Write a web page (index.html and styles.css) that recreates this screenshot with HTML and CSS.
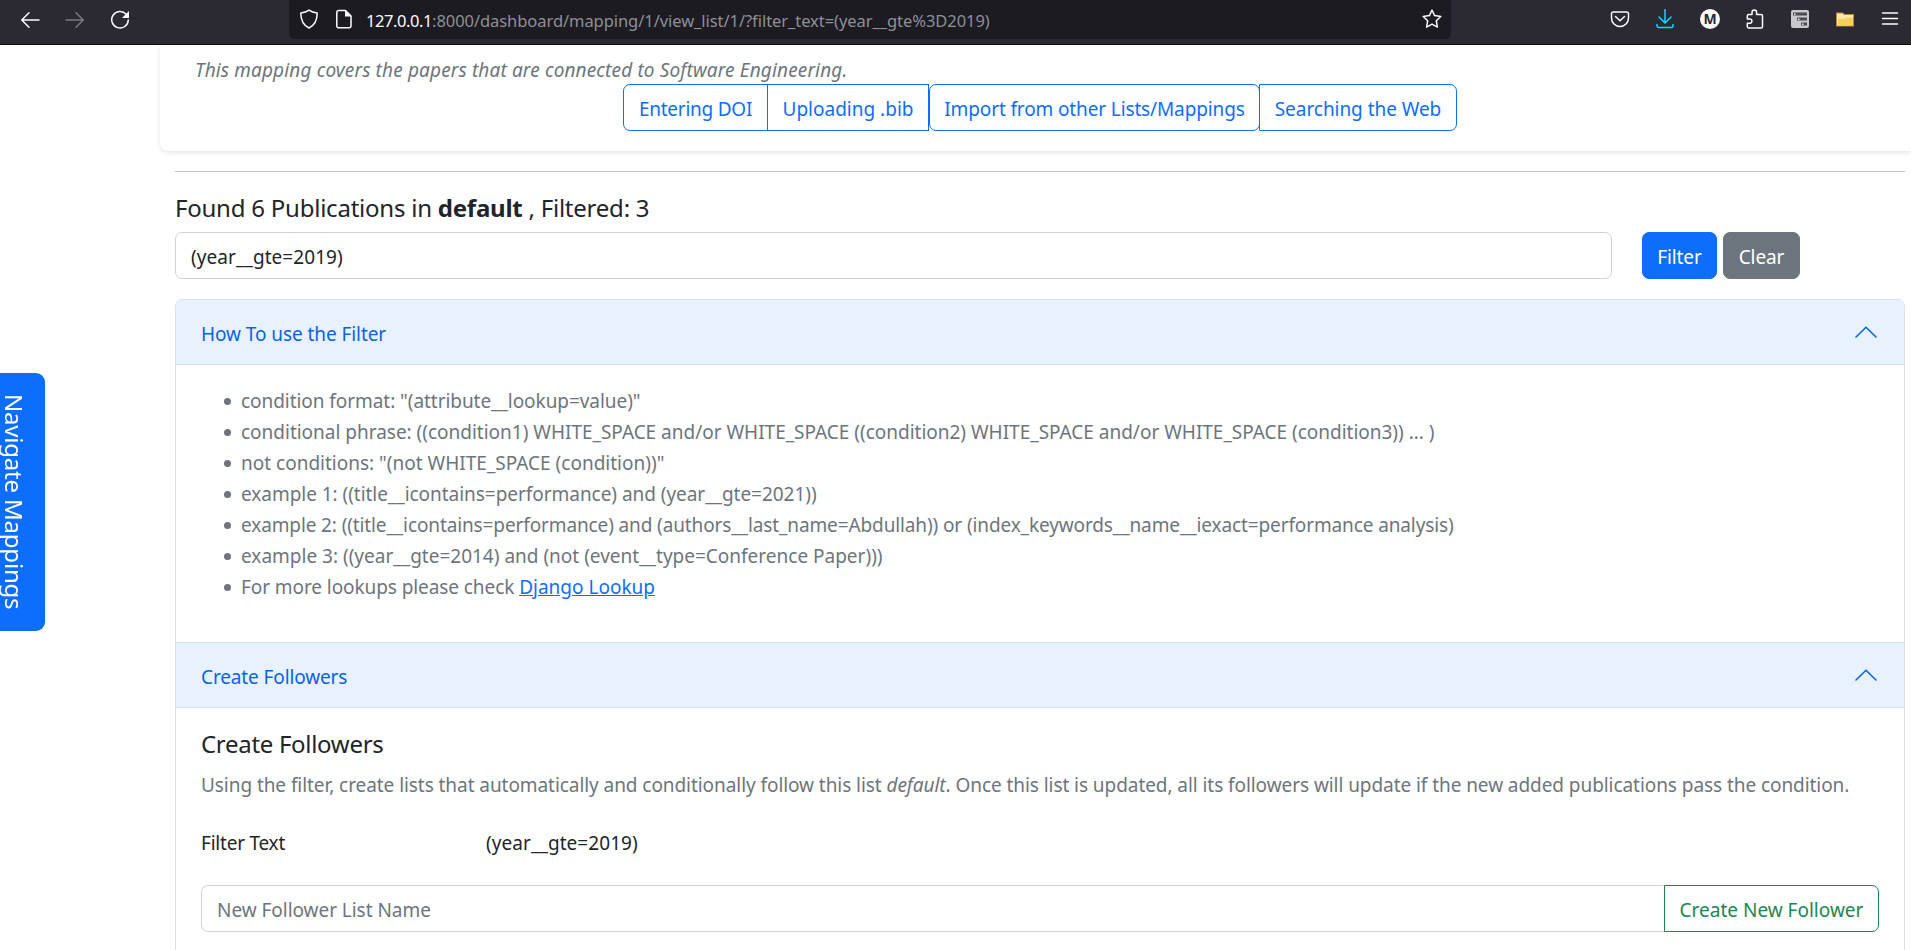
FILE: index.html
```html
<!DOCTYPE html>
<html lang="en">
<head>
<meta charset="utf-8">
<title>Mapping list</title>
<link rel="stylesheet" href="styles.css">
</head>
<body>
<header class="toolbar">
  <nav class="nav-icons">
    <svg class="icon" viewBox="0 0 20 20"><path d="M19 10H2M9 2.700 1.800 10 9 17.300"/></svg>
    <svg class="icon dim" viewBox="0 0 20 20"><path d="M1 10h17M11 2.700 18.200 10 11 17.300"/></svg>
    <svg class="icon" viewBox="0 0 20 20"><path d="M16.200 4.200A8.300 8.300 0 1 0 18.300 10"/><path class="solid" d="M19 1v7h-7z"/></svg>
  </nav>
  <div class="urlbar">
    <svg class="icon shield" viewBox="0 0 20 20"><path d="M10 1.200c2.300 1.700 5.200 2.500 8.200 2.800 0 6.500-2 12-8.200 15C3.800 16 1.800 10.500 1.800 4 4.800 3.700 7.700 2.900 10 1.200z"/></svg>
    <svg class="icon file" viewBox="0 0 20 20"><path d="M4.500 1.500h7l5.500 5.500v10a1.700 1.700 0 0 1-1.700 1.700H4.500a1.700 1.700 0 0 1-1.700-1.700V3.200a1.700 1.700 0 0 1 1.700-1.700z"/><path class="solid" d="M11 1.200 17.500 7.500H11z"/></svg>
    <div class="url"><span class="host">127.0.0.1</span><span class="path">:8000/dashboard/mapping/1/view_list/1/?filter_text=(year__gte%3D2019)</span></div>
    <svg class="icon star" viewBox="0 0 20 20"><path d="M10 1.200l2.600 5.400 6.200.9-4.500 4.200 1.100 6.400L10 15.200l-5.400 2.900 1.100-6.400-4.500-4.200 6.200-.9z"/></svg>
  </div>
  <div class="actions">
    <svg class="icon" viewBox="0 0 20 20"><path d="M3.200 3h13.600A1.700 1.700 0 0 1 18.500 4.700V9A8.500 8.500 0 0 1 1.500 9V4.700A1.700 1.700 0 0 1 3.200 3zM5.500 7.500 10 11.800l4.500-4.300"/></svg>
    <svg class="icon cyan" viewBox="0 0 20 20"><path d="M10 .5v13M4 8l6 6 6-6M2 15.500v1.300A1.700 1.700 0 0 0 3.700 18.500h12.600A1.700 1.700 0 0 0 18 16.800v-1.300"/></svg>
    <span class="avatar">M</span>
    <svg class="icon" viewBox="0 0 20 20"><path d="M7 5.500V3.300a2.300 2.300 0 0 1 4.600 0V5.500H16A1.500 1.500 0 0 1 17.500 7V17.500A1.500 1.500 0 0 1 16 19H3.800A1.500 1.500 0 0 1 2.300 17.500V14.300H4.700a2.200 2.200 0 0 0 0-4.400H2.300V7A1.500 1.500 0 0 1 3.800 5.500z"/></svg>
    <svg class="icon flat" viewBox="0 0 20 20"><rect x="1" y="1" width="18" height="18" rx="2" fill="#c9c9cd"/><path fill="#4c4b54" d="M3 3.500h14v3H3zM7 8.500h10v3H7zM11 13.500h6v3h-6z"/><path fill="#eee" d="M4 4.500h1.500V6H4zM8 9.500h1.500V11H8zM12 14.500h1.500V16H12z"/></svg>
    <svg class="icon flat" viewBox="0 0 20 20"><path fill="#b98a3a" d="M1 3.500h7l1.500 1.500H19V17.500H1z"/><path fill="#ffe9a8" d="M2 4.500h5.500l1.500 1.500h9V16.500H2z"/><path fill="#f5d05c" d="M3 10h6.500L11 8.500h7V16.500H3z"/></svg>
    <svg class="icon" viewBox="0 0 20 20"><path d="M2.500 4h15M2.500 9.500h15M2.500 15h15"/></svg>
  </div>
</header>

<aside class="side-tab">Navigate Mappings</aside>

<main class="page">
  <section class="card">
    <p class="lead"><em>This mapping covers the papers that are connected to Software Engineering.</em></p>
    <div class="btn-row">
      <a class="btn outline by-doi">Entering DOI</a>
      <a class="btn outline by-bib">Uploading .bib</a>
      <a class="btn outline by-import">Import from other Lists/Mappings</a>
      <a class="btn outline by-web">Searching the Web</a>
    </div>
  </section>

  <div class="content">
    <hr class="rule">
    <h5 class="found">Found 6 Publications in <b>default</b> , Filtered: 3</h5>
    <div class="filter-row">
      <div class="input grow">(year__gte=2019)</div>
      <div class="filter-actions">
        <a class="btn primary">Filter</a>
        <a class="btn secondary">Clear</a>
      </div>
    </div>

    <section class="accordion">
      <div class="acc-head"><span>How To use the Filter</span>
        <svg class="chevron" viewBox="0 0 22 12"><path d="M1 11 11 1.200 21 11"/></svg></div>
      <div class="acc-body help">
        <ul class="tips">
          <li class="format">condition format: "(attribute__lookup=value)"</li>
          <li class="phrase">conditional phrase: ((condition1) WHITE_SPACE and/or WHITE_SPACE ((condition2) WHITE_SPACE and/or WHITE_SPACE (condition3)) ... )</li>
          <li>not conditions: "(not WHITE_SPACE (condition))"</li>
          <li class="example-1">example 1: ((title__icontains=performance) and (year__gte=2021))</li>
          <li class="example-2">example 2: ((title__icontains=performance) and (authors__last_name=Abdullah)) or (index_keywords__name__iexact=performance analysis)</li>
          <li>example 3: ((year__gte=2014) and (not (event__type=Conference Paper)))</li>
          <li class="more">For more lookups please check <a class="link">Django Lookup</a></li>
        </ul>
      </div>
      <div class="acc-head second"><span>Create Followers</span>
        <svg class="chevron" viewBox="0 0 22 12"><path d="M1 11 11 1.200 21 11"/></svg></div>
      <div class="acc-body followers">
        <h5 class="sub">Create Followers</h5>
        <p class="muted">Using the filter, create lists that automatically and conditionally follow this list <em>default</em>. Once this list is updated, all its followers will update if the new added publications pass the condition.</p>
        <div class="field"><span class="label">Filter Text</span><span class="value">(year__gte=2019)</span></div>
        <div class="group">
          <div class="input placeholder">New Follower List Name</div>
          <a class="btn success">Create New Follower</a>
        </div>
      </div>
    </section>
  </div>
</main>
</body>
</html>
```
FILE: styles.css
```css
* { box-sizing: border-box; }
html, body { margin: 0; height: 100%; overflow: hidden; }
body { display: flex; flex-direction: column; background: #fff; color: #212529; font: 19px/30px "Noto Sans", sans-serif; white-space: nowrap; }
p, h5, ul { margin: 0; padding: 0; font-weight: 400; }

/* Browser toolbar */
.toolbar { flex: none; display: flex; height: 45px; background: #2b2a33; border-bottom: 1px solid #0c0c0d; }
.nav-icons { display: flex; gap: 25px; width: 289px; padding: 10px 0 0 20px; }
.icon { width: 20px; height: 20px; flex: none; fill: none; stroke: #fbfbfe; stroke-width: 1.5; stroke-linecap: round; stroke-linejoin: round; }
.icon .solid { fill: #fbfbfe; stroke: none; }
.icon.dim { stroke: #7b7a80; }
.icon.cyan { stroke: #00ddff; }
.icon.flat { stroke: none; }
.urlbar { display: flex; width: 1162px; height: 39px; background: #1c1b22; border-radius: 0 0 5px 5px; padding: 9px 9px 0 10px; }
.file { margin-left: 15px; }
.url { flex: 1; margin-left: 12px; font-size: 16.5px; line-height: 24px; color: #8f8f94; }
.host { color: #fbfbfe; letter-spacing: -.43px; }
.path { letter-spacing: -.06px; }
.actions { display: flex; gap: 25px; padding: 9px 0 0 159px; }
.avatar { width: 20px; height: 20px; border-radius: 50%; background: #fbfbfe; color: #2b2a33; font: 700 14px/20px "Noto Sans", sans-serif; text-align: center; }

/* Tab pinned to the left edge of the window */
.side-tab { position: fixed; left: 0; top: 373px; width: 45px; height: 258px; background: #0d6efd; color: #fff; border-radius: 0 9px 9px 0; writing-mode: vertical-rl; font-size: 24px; line-height: 30px; letter-spacing: -.2px; padding: 21px 16px 0 0; }

.page { flex: 1; overflow: hidden; padding-left: 160px; }
.card { height: 106px; padding: 10px 0 0 35px; border-radius: 0 0 0 8px; box-shadow: 0 2px 5px rgba(0,0,0,.1); }
.lead { height: 29px; color: #6c757d; letter-spacing: .14px; }
.btn-row { display: flex; padding-left: 428px; }
.btn { display: flex; align-items: center; justify-content: center; height: 47px; border: 1px solid; border-radius: 7px; padding-top: 2px; }
.outline { color: #0d6efd; }
.by-doi { width: 145px; border-radius: 7px 0 0 7px; letter-spacing: -.25px; }
.by-bib { width: 162px; margin-left: -1px; border-radius: 0; }
.by-import { width: 331px; letter-spacing: -.13px; }
.by-web { width: 198px; margin-left: -1px; border-radius: 0 7px 7px 0; letter-spacing: -.05px; }
.content { margin: 20px 6px 0 15px; }
.rule { height: 1px; border: 0; margin: 0; background: #c8c9ca; }
.found { font-size: 24px; line-height: 30px; letter-spacing: -.23px; padding-top: 21px; height: 60px; }
.filter-row { display: flex; gap: 30px; }
.input { display: flex; align-items: center; height: 47px; border: 1px solid #ced4da; border-radius: 7px; padding: 2px 15px 0; }
.grow { width: 1437px; letter-spacing: .06px; }
.filter-actions { display: flex; gap: 6px; letter-spacing: -.1px; }
.primary { width: 75px; background: #0d6efd; border-color: #0d6efd; color: #fff; }
.secondary { width: 77px; background: #6c757d; border-color: #6c757d; color: #fff; }

.accordion { margin-top: 20px; height: 700px; border: 1px solid #dee2e6; border-radius: 7px; overflow: hidden; }
.acc-head { display: flex; align-items: center; justify-content: space-between; height: 65px; padding: 3px 27px 0 25px; background: #e7f1ff; color: #0c63e4; border-bottom: 1px solid #d9e1ec; letter-spacing: -.07px; }
.acc-head.second { height: 66px; border-top: 1px solid #dee2e6; letter-spacing: -.12px; }
.chevron { width: 22px; height: 12px; margin-top: -3px; fill: none; stroke: #0c63e4; stroke-width: 1.6; stroke-linecap: round; stroke-linejoin: round; }
.acc-body { padding: 20px 25px 0; }
.help { height: 277px; padding-top: 21px; color: #6c757d; }
.tips { list-style: none; padding-left: 40px; line-height: 31px; }
.tips li::before { content: ""; display: inline-block; width: 7px; height: 7px; border-radius: 50%; background: #6c757d; margin: 0 10px 3px -17px; }
.format { letter-spacing: -.055px; }
.phrase { letter-spacing: -.013px; }
.example-1 { letter-spacing: -.04px; }
.example-2 { letter-spacing: -.118px; }
.more { letter-spacing: -.08px; }
.link { color: #0d6efd; text-decoration: underline; letter-spacing: 0; }
.sub { font-size: 24px; line-height: 30px; letter-spacing: -.3px; padding-top: 1px; height: 41px; }
.muted { color: #6c757d; height: 59px; padding-top: 1px; letter-spacing: -.064px; }
.field { display: flex; height: 57px; }
.label { width: 285px; letter-spacing: -.22px; }
.value { letter-spacing: .06px; }
.group { display: flex; }
.placeholder { flex: 1; color: #6c757d; border-radius: 7px 0 0 7px; border-right: 0; letter-spacing: -.04px; }
.success { width: 215px; color: #198754; border-radius: 0 7px 7px 0; }
```
